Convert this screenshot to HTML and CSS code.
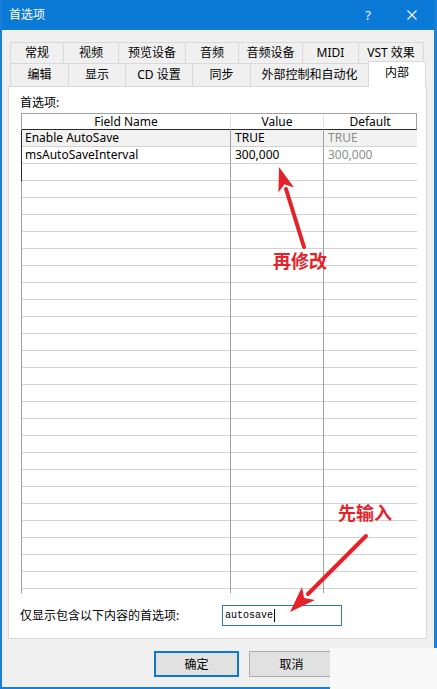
FILE: index.html
```html
<!DOCTYPE html>
<html lang="zh-CN">
<head>
    <meta charset="UTF-8">
    <title>首选项</title>
    <link rel="stylesheet" href="styles.css">
</head>
<body>
    <div class="window">
        <div class="titlebar">
            <span class="title">首选项</span>
            <span class="cap-btn help">?</span>
            <span class="cap-btn close">
                <svg width="10" height="10" viewBox="0 0 10 10"><path d="M0.5 0.5L9.5 9.5M9.5 0.5L0.5 9.5" stroke="#fff" stroke-width="1.1" fill="none"/></svg>
            </span>
        </div>

        <div class="content">
            <div class="tabs tabs-back">
                <div class="tab">常规</div>
                <div class="tab">视频</div>
                <div class="tab">预览设备</div>
                <div class="tab">音频</div>
                <div class="tab">音频设备</div>
                <div class="tab">MIDI</div>
                <div class="tab">VST 效果</div>
            </div>
            <div class="tabs tabs-front">
                <div class="tab">编辑</div>
                <div class="tab">显示</div>
                <div class="tab">CD 设置</div>
                <div class="tab">同步</div>
                <div class="tab">外部控制和自动化</div>
                <div class="tab active">内部</div>
            </div>

            <div class="panel">
                <div class="panel-label">首选项:</div>
                <div class="list">
                    <div class="row list-head">
                        <div class="cell">Field Name</div>
                        <div class="cell">Value</div>
                        <div class="cell">Default</div>
                    </div>
                    <div class="row focus selected">
                        <div class="cell">Enable AutoSave</div>
                        <div class="cell">TRUE</div>
                        <div class="cell muted">TRUE</div>
                    </div>
                    <div class="row focus">
                        <div class="cell">msAutoSaveInterval</div>
                        <div class="cell">300,000</div>
                        <div class="cell muted">300,000</div>
                    </div>
                    <div class="row focus">
                        <div class="cell"></div>
                        <div class="cell"></div>
                        <div class="cell"></div>
                    </div>
                    <!-- empty grid below the entries -->
                    <div class="list-fill">
                        <span></span><span></span><span></span>
                    </div>
                </div>

                <div class="filter">
                    <label class="filter-label">仅显示包含以下内容的首选项:</label>
                    <div class="filter-input">autosave<span class="caret"></span></div>
                </div>
            </div>

            <div class="buttons">
                <button class="btn btn-default">确定</button>
                <button class="btn">取消</button>
            </div>
        </div>

        <div class="corner-patch"></div>

        <!-- red callouts -->
        <svg class="notes" width="437" height="689" viewBox="0 0 437 689">
            <g fill="#e4222a">
                <path d="M304 247L286 189" stroke="#e4222a" stroke-width="4" stroke-linecap="round"/>
                <polygon points="279,167 294,187.5 284.4,184.2 278.4,192.4"/>
                <path d="M366 536L308 594" stroke="#e4222a" stroke-width="4" stroke-linecap="round"/>
                <polygon points="290,612 302,587 304.1,597.9 315,600"/>
                <text x="273" y="268" class="note-text">再修改</text>
                <text x="338" y="520" class="note-text">先输入</text>
            </g>
        </svg>
    </div>
</body>
</html>
```

FILE: styles.css
```css
body {
    margin: 0;
    font-family: "Noto Sans", "Noto Sans CJK SC", sans-serif;
    font-size: 12px;
    color: #000;
    background: #fff;
}

.window {
    position: relative;
    width: 437px;
    height: 689px;
    box-sizing: border-box;
    background: #f0f0f0;
    border: solid #1a7fd6;
    border-width: 0 3px 2px 2px;
}

.titlebar {
    display: flex;
    align-items: center;
    height: 30px;
    padding-left: 7px;
    background: #0b79d6;
    color: #fff;
}
.title {
    flex: 1;
    line-height: 16px;
}
.cap-btn {
    width: 44px;
    height: 30px;
    display: flex;
    align-items: center;
    justify-content: center;
}
.help {
    font-size: 13px;
}

.content {
    padding: 12px 7px 0 6px;
}

.tabs {
    display: grid;
    margin-left: 2px;
}
.tabs-back {
    grid-template-columns: 53px 55px 67px 53px 64px 56px 66px;
    height: 21px;
}
.tabs-front {
    grid-template-columns: 58px 57px 67px 58px 118px 58px;
    height: 23px;
}
.tab {
    display: flex;
    align-items: center;
    justify-content: center;
    border: 1px solid #d9d9d9;
    border-right: 0;
    border-bottom: 0;
    line-height: 16px;
    white-space: nowrap;
}
.tab:last-child {
    border-right: 1px solid #d9d9d9;
}
.tab.active {
    position: relative;
    z-index: 1;
    margin: -2px 0 -1px;
    padding-bottom: 3px;
    background: #fff;
}

.panel {
    height: 553px;
    box-sizing: border-box;
    padding: 7px 0 0 12px;
    background: #fff;
    border: 1px solid #d9d9d9;
}
.panel-label {
    height: 17px;
    line-height: 17px;
    margin: 0 0 2px -1px;
}

.list {
    width: 396px;
    height: 480px;
    display: flex;
    flex-direction: column;
}
.row {
    flex: none;
    display: grid;
    grid-template-columns: 209px 93px 93px;
    height: 17px;
    box-sizing: border-box;
    border-left: 1px solid #a0a0a0;
}
.cell {
    padding-left: 4px;
    line-height: 16px;
    white-space: nowrap;
    overflow: hidden;
    border-right: 1px solid #a0a0a0;
    border-bottom: 1px solid #d2d2d2;
}
.cell:first-child {
    padding-left: 3px;
}
.cell:last-child {
    border-right: 0;
}
.list-head {
    border-top: 1px solid #a0a0a0;
}
.list-head .cell {
    padding: 0;
    line-height: 15px;
    text-align: center;
    border-right-color: #e3e3e3;
    border-bottom: 1px solid #2a2a2a;
}
.list-head .cell:last-child {
    border-right: 1px solid #a0a0a0;
}
.row.focus {
    border-left-color: #2a2a2a;
}
.row.selected {
    background: #f2f2f2;
}
.muted {
    color: #8c8c8c;
}

.list-fill {
    flex: 1;
    display: grid;
    grid-template-columns: 209px 93px 93px;
    border-left: 1px solid #a0a0a0;
    background: repeating-linear-gradient(to bottom, transparent 0 16px, #d2d2d2 16px 17px);
}
.list-fill span {
    border-right: 1px solid #a0a0a0;
}
.list-fill span:last-child {
    border-right: 0;
}

.filter {
    display: flex;
    align-items: center;
    height: 21px;
    margin-top: 12px;
}
.filter-label {
    flex: none;
    width: 202px;
    margin-left: -1px;
    line-height: 16px;
}
.filter-input {
    display: flex;
    align-items: center;
    width: 120px;
    height: 21px;
    box-sizing: border-box;
    padding-left: 2px;
    border: 1px solid #2f78b0;
    font-family: "Liberation Mono", monospace;
    font-size: 10px;
}
.caret {
    width: 1px;
    height: 13px;
    margin-left: 1px;
    background: #000;
}

.buttons {
    display: flex;
    gap: 10px;
    margin-top: 12px;
    padding-left: 146px;
}
.btn {
    width: 85px;
    height: 26px;
    box-sizing: border-box;
    padding: 0;
    border: 1px solid #adadad;
    background: #e1e1e1;
    color: #000;
    font: inherit;
}
.btn-default {
    border: 2px solid #0a78d7;
}

.corner-patch {
    position: absolute;
    left: 328px;
    top: 648px;
    right: -3px;
    bottom: -2px;
    background: #f9f9f9;
}

.notes {
    position: absolute;
    left: -2px;
    top: 0;
    pointer-events: none;
}
.note-text {
    font-family: "Noto Sans CJK SC", sans-serif;
    font-size: 18px;
    font-weight: 700;
}
```
